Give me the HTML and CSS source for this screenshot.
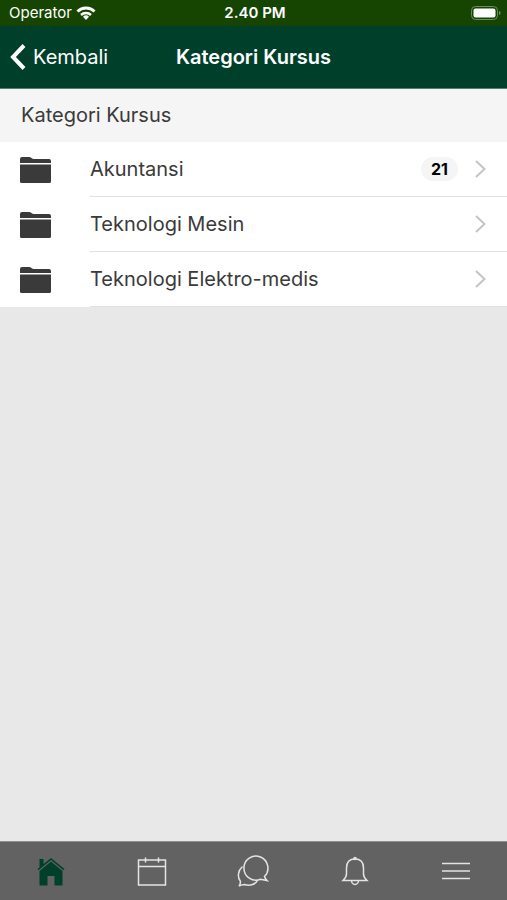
FILE: index.html
```html
<!DOCTYPE html>
<html lang="id">
  <head>
    <meta charset="UTF-8" />
    <meta name="viewport" content="width=device-width, initial-scale=1.0" />
    <title>Kategori Kursus</title>
    <link rel="stylesheet" href="styles.css">
  </head>
  <body>
    <div class="status-bar">
      <div class="carrier">
        <span>Operator</span>
        <svg width="20" height="14" viewBox="0 0 20 14" fill="none" stroke="#fff" stroke-width="3">
          <path d="M1.5 5.5a12 12 0 0 1 17 0" />
          <path d="M5 9a7.2 7.2 0 0 1 10 0" stroke-width="2.5" />
          <path d="M10 14l-3-3.2a4.3 4.3 0 0 1 6 0z" fill="#fff" stroke="none" />
        </svg>
      </div>
      <span class="time">2.40 PM</span>
      <svg class="battery" width="30" height="14" viewBox="0 0 30 14">
        <rect x="0.5" y="0.5" width="26" height="13" rx="4" fill="none" stroke="#6f8b60" />
        <rect x="2.500" y="2.500" width="22" height="9" rx="2" fill="#fff" />
        <path d="M28 5c2 .5 2 3.500 0 4z" fill="#6f8b60" />
      </svg>
    </div>

    <header class="nav-bar">
      <button class="back" type="button">
        <svg width="16" height="26" viewBox="0 0 16 26" fill="none" stroke="#fff" stroke-width="4">
          <path d="M14 1.500L3 13l11 11.500" />
        </svg>
        <span>Kembali</span>
      </button>
      <h1>Kategori Kursus</h1>
    </header>

    <main>
      <h2>Kategori Kursus</h2>
      <ul class="categories">
        <li>
          <a href="#akuntansi">
            <svg class="folder" width="31" height="26" viewBox="0 0 31 26">
              <path d="M0 6V2Q0 0 2 0h7q1.500 0 2.500 1t2.500 1h15q2 0 2 2v2zM0 7.500h31V24.500q0 1.500-1.500 1.500H1.500q-1.500 0-1.500-1.500z" />
            </svg>
            <span class="item">
              <span class="name">Akuntansi</span>
              <span class="badge">21</span>
              <svg class="chevron" width="11" height="18" viewBox="0 0 11 18">
                <path d="M1 1l8.500 8L1 17" />
              </svg>
            </span>
          </a>
        </li>
        <li>
          <a href="#teknologi-mesin">
            <svg class="folder" width="31" height="26" viewBox="0 0 31 26">
              <path d="M0 6V2Q0 0 2 0h7q1.500 0 2.500 1t2.500 1h15q2 0 2 2v2zM0 7.500h31V24.500q0 1.500-1.500 1.500H1.500q-1.500 0-1.500-1.500z" />
            </svg>
            <span class="item">
              <span class="name">Teknologi Mesin</span>
              <svg class="chevron" width="11" height="18" viewBox="0 0 11 18">
                <path d="M1 1l8.500 8L1 17" />
              </svg>
            </span>
          </a>
        </li>
        <li>
          <a href="#teknologi-elektro-medis">
            <svg class="folder" width="31" height="26" viewBox="0 0 31 26">
              <path d="M0 6V2Q0 0 2 0h7q1.500 0 2.500 1t2.500 1h15q2 0 2 2v2zM0 7.500h31V24.500q0 1.500-1.500 1.500H1.500q-1.500 0-1.500-1.500z" />
            </svg>
            <span class="item">
              <span class="name">Teknologi Elektro-medis</span>
              <svg class="chevron" width="11" height="18" viewBox="0 0 11 18">
                <path d="M1 1l8.500 8L1 17" />
              </svg>
            </span>
          </a>
        </li>
      </ul>
    </main>

    <nav class="tabs">
      <a class="active" href="#home" aria-label="Beranda">
        <svg width="32" height="32" viewBox="0 0 32 32">
          <path d="M4.500 12.500V4h4v5L16 3l13.500 11-1 1.200L16 5 3.500 15.200l-1-1.200z" />
          <path d="M4.500 16L16 6.500 27.500 16v14.500h-8V21h-7v9.500h-8z" />
        </svg>
      </a>
      <a href="#calendar" aria-label="Kalender">
        <svg width="32" height="32" viewBox="0 0 32 32">
          <path d="M2.500 5h27v25h-27zM2.500 11.500h27M9.500 2.500v5M22.500 2.500v5" />
        </svg>
      </a>
      <a href="#messages" aria-label="Pesan">
        <svg width="32" height="32" viewBox="0 0 32 32">
          <path d="M27.500 21.500A12 12 0 1 0 23.500 24.200Q26 24.700 30 25.500Q28 23.500 27.500 21.500z" />
          <path d="M5.500 11.500C1 15.500 0 22 3.500 26.500Q3.500 29 2 31Q5 29.500 7.500 29.500C12 31 18.500 30 20.500 25.200" />
        </svg>
      </a>
      <a href="#notifications" aria-label="Notifikasi">
        <svg width="32" height="32" viewBox="0 0 32 32">
          <path d="M16 4C10 4 7.500 8 7.500 13v6q0 3-3.500 6.500h24q-3.500-3.500-3.500-6.500v-6C24.500 8 22 4 16 4zM12.500 25.500a3.500 4 0 0 0 7 0" />
          <circle class="dot" cx="16" cy="3.500" r="1.800" />
        </svg>
      </a>
      <a href="#more" aria-label="Menu">
        <svg width="32" height="32" viewBox="0 0 32 32">
          <path d="M2 8.500h28M2 16h28M2 23.500h28" />
        </svg>
      </a>
    </nav>
  </body>
</html>
```

FILE: styles.css
```css
* {
  box-sizing: border-box;
}

body {
  display: flex;
  flex-direction: column;
  min-height: 100vh;
  margin: 0;
  font-family: Inter, "Liberation Sans", sans-serif;
  font-size: 20px;
  line-height: 24px;
  color: #3a3a3a;
  background-color: #e8e8e8;
}

svg {
  display: block;
  flex: none;
}

.status-bar,
.nav-bar {
  display: grid;
  grid-template-columns: 1fr auto 1fr;
  align-items: center;
  color: white;
}

.status-bar {
  height: 26px;
  padding: 0 6px 0 9px;
  font-size: 15px;
  background-color: #154500;
}

.carrier {
  display: flex;
  align-items: center;
  gap: 4px;
}

.time {
  font-weight: 600;
}

.battery {
  justify-self: end;
}

.nav-bar {
  height: 63px;
  padding: 0 10px;
  background-color: #00402a;
  border-bottom: 1px solid #55806f;
}

.back {
  display: flex;
  align-items: center;
  justify-self: start;
  gap: 7px;
  padding: 0;
  border: none;
  background: none;
  color: white;
  font: inherit;
  cursor: pointer;
}

h1,
h2 {
  margin: 0;
  font-size: 20px;
}

h1 {
  font-weight: 600;
}

h2 {
  padding: 14px 21px 15px;
  font-weight: 400;
  background-color: #f5f5f5;
}

main {
  flex: 1;
}

.categories {
  margin: 0;
  padding: 0;
  list-style-type: none;
  background-color: white;
}

.categories a {
  display: flex;
  align-items: center;
  gap: 39px;
  padding-left: 20px;
  color: inherit;
  text-decoration: none;
}

.folder {
  fill: #3a3a3a;
}

.item {
  display: flex;
  flex: 1;
  align-items: center;
  gap: 17px;
  height: 55px;
  padding-right: 21px;
  border-bottom: 1px solid #e0e0e0;
}

.name {
  flex: 1;
}

.badge {
  padding: 0 10px;
  border-radius: 12px;
  font-size: 16px;
  font-weight: 700;
  color: black;
  background-color: #f5f5f5;
}

.chevron {
  fill: none;
  stroke: #c4c4c4;
  stroke-width: 2;
}

.tabs {
  display: grid;
  grid-template-columns: repeat(5, 1fr);
  height: 59px;
  border-top: 1px solid #909090;
  background-color: #626262;
}

.tabs a {
  display: flex;
  align-items: center;
  justify-content: center;
}

.tabs svg {
  fill: none;
  stroke: #e4e4e4;
  stroke-width: 1.5;
}

.tabs .dot {
  fill: #e4e4e4;
  stroke: none;
}

.tabs .active svg {
  fill: #00402a;
  stroke: none;
}
```
